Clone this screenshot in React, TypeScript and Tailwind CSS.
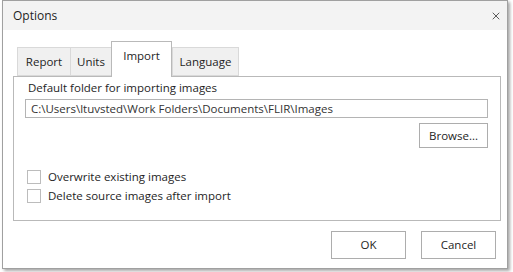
import { X } from "lucide-react"

const tabs = [
  { label: "Report", w: "w-[53px]" },
  { label: "Units", w: "w-[41px]" },
  { label: "Import", w: "w-[61px]", active: true },
  { label: "Language", w: "w-[67px]" },
]

const Checkbox = ({ label }: { label: string }) => (
  <div className="flex items-center h-[19px]">
    <div className="w-[14px] h-[14px] border border-[#bcbcbc] bg-white" />
    <span className="ml-[7px]">{label}</span>
  </div>
)

export default function App() {
  return (
    <div
      className="w-[513px] h-[272px] bg-white text-[11.5px] text-[#1e1e1e] overflow-hidden"
      style={{ fontFamily: '"Open Sans", "Noto Sans", sans-serif' }}
    >
      <div className="ml-[2px] w-[506px] h-[269px] border border-[#a0a0a0] bg-white flex flex-col shadow-[2px_2px_3px_rgba(0,0,0,0.35)]">
        {/* title bar */}
        <div className="h-[29px] bg-[#f3f3f3] flex items-center justify-between pl-[10px] pr-[5px]">
          <span className="text-[12px]">Options</span>
          <X className="w-[12px] h-[12px] text-[#333]" strokeWidth={1.6} />
        </div>

        <div className="flex-1 px-[10px] pt-[10px]">
          {/* tabs */}
          <div className="flex items-end h-[36px] pl-[4px]">
            {tabs.map((t) =>
              t.active ? (
                <div
                  key={t.label}
                  className={`${t.w} h-[36px] -mb-px relative z-10 bg-white border border-b-0 border-[#b9b9b9] flex justify-center pt-[5px]`}
                >
                  {t.label}
                </div>
              ) : (
                <div
                  key={t.label}
                  className={`${t.w} h-[29px] bg-[#f0f0f0] border border-[#d9d9d9] border-r-0 last:border-r flex items-center justify-center`}
                >
                  {t.label}
                </div>
              )
            )}
          </div>

          {/* panel */}
          <div className="w-[488px] h-[145px] border border-[#b9b9b9] pl-[11px] pr-[12px] pt-[1px]">
            <div className="h-[19px] flex items-center pl-[3px]">Default folder for importing images</div>
            <div className="mt-[2px] h-[19px] border border-[#b4b4b4] flex items-center px-[5px] text-[#333]">
              C:\Users\ltuvsted\Work Folders\Documents\FLIR\Images
            </div>
            <div className="flex justify-end mt-[5px]">
              <button className="w-[69px] h-[25px] border border-[#adadad] bg-white">Browse...</button>
            </div>
            <div className="mt-[19px] pl-[2px] flex flex-col">
              <Checkbox label="Overwrite existing images" />
              <Checkbox label="Delete source images after import" />
            </div>
          </div>

          {/* buttons */}
          <div className="flex justify-end gap-[15px] mt-[10px] pr-[1px]">
            <button className="w-[75px] h-[28px] border border-[#adadad] bg-white">OK</button>
            <button className="w-[75px] h-[28px] border border-[#adadad] bg-white">Cancel</button>
          </div>
        </div>
      </div>
    </div>
  )
}
